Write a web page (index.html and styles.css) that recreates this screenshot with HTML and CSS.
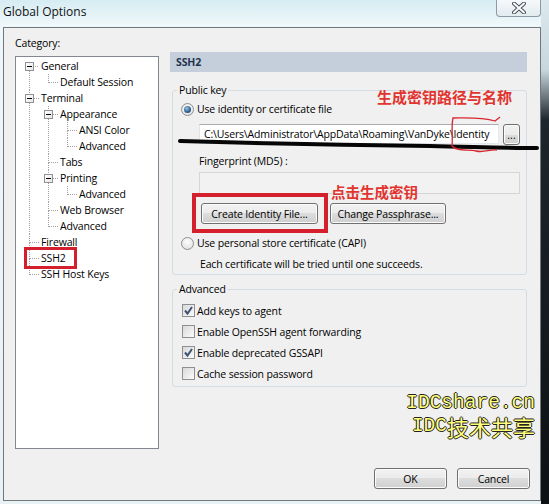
FILE: index.html
```html
<!DOCTYPE html>
<html lang="en">
<head>
    <meta charset="UTF-8">
    <title>Global Options</title>
    <link rel="stylesheet" href="styles.css">
</head>
<body>
    <div class="frame">
        <div class="titlebar">
            <span class="title">Global Options</span>
            <span class="close">
                <svg width="14" height="12" viewBox="0 0 14 12">
                    <path d="M2 1.5 L12 10.5 M12 1.5 L2 10.5" stroke="#4a4f55" stroke-width="4" stroke-linecap="round"/>
                    <path d="M2 1.5 L12 10.5 M12 1.5 L2 10.5" stroke="#fbfcfd" stroke-width="2" stroke-linecap="round"/>
                </svg>
            </span>
        </div>

        <div class="client">
            <div class="main">
                <div class="left">
                    <div class="cat-label">Category:</div>
                    <div class="tree-box">
                        <ul class="tree">
                            <li><span class="exp"></span><span class="txt">General</span>
                                <ul>
                                    <li><span class="txt">Default Session</span></li>
                                </ul>
                            </li>
                            <li><span class="exp"></span><span class="txt">Terminal</span>
                                <ul>
                                    <li><span class="exp"></span><span class="txt">Appearance</span>
                                        <ul>
                                            <li><span class="txt">ANSI Color</span></li>
                                            <li><span class="txt">Advanced</span></li>
                                        </ul>
                                    </li>
                                    <li><span class="txt">Tabs</span></li>
                                    <li><span class="exp"></span><span class="txt">Printing</span>
                                        <ul>
                                            <li><span class="txt">Advanced</span></li>
                                        </ul>
                                    </li>
                                    <li><span class="txt">Web Browser</span></li>
                                    <li><span class="txt">Advanced</span></li>
                                </ul>
                            </li>
                            <li><span class="txt">Firewall</span></li>
                            <li><span class="txt">SSH2</span></li>
                            <li><span class="txt">SSH Host Keys</span></li>
                        </ul>
                    </div>
                </div>

                <div class="right">
                    <div class="page-head">SSH2</div>

                    <fieldset class="group pubkey">
                        <legend>Public key</legend>
                        <div class="opt"><span class="radio on"></span>Use identity or certificate file</div>
                        <div class="path-row">
                            <div class="textbox">C:\Users\Administrator\AppData\Roaming\VanDyke\Identity</div>
                            <button class="btn browse">...</button>
                        </div>
                        <div class="sub-label">Fingerprint (MD5) :</div>
                        <div class="fp-box"></div>
                        <div class="btn-row">
                            <button class="btn create">Create Identity File...</button>
                            <button class="btn change">Change Passphrase...</button>
                        </div>
                        <div class="opt capi"><span class="radio"></span>Use personal store certificate (CAPI)</div>
                        <div class="hint">Each certificate will be tried until one succeeds.</div>
                    </fieldset>

                    <fieldset class="group advanced">
                        <legend>Advanced</legend>
                        <div class="chk-row"><span class="check on"><svg width="11" height="11" viewBox="0 0 11 11"><path d="M2 5.5 L4.5 8.5 L9 2" stroke="#3d5275" stroke-width="2" fill="none"/></svg></span>Add keys to agent</div>
                        <div class="chk-row"><span class="check"></span>Enable OpenSSH agent forwarding</div>
                        <div class="chk-row"><span class="check on"><svg width="11" height="11" viewBox="0 0 11 11"><path d="M2 5.5 L4.5 8.5 L9 2" stroke="#3d5275" stroke-width="2" fill="none"/></svg></span>Enable deprecated GSSAPI</div>
                        <div class="chk-row"><span class="check"></span>Cache session password</div>
                    </fieldset>
                </div>
            </div>

            <div class="footer">
                <button class="btn ok">OK</button>
                <button class="btn cancel">Cancel</button>
            </div>
        </div>

        <!-- 标注 -->
        <div class="note note-path">生成密钥路径与名称</div>
        <div class="note note-create">点击生成密钥</div>
        <div class="mark mark-ssh2"></div>
        <div class="mark mark-create"></div>
        <svg class="scribble" width="549" height="504" viewBox="0 0 549 504">
            <path d="M180 141 C 250 143, 340 145, 430 146 C 480 147, 515 148, 537 148" stroke="#050505" stroke-width="4" fill="none" stroke-linecap="round"/>
            <path d="M500 117 L 495 121 C 482 117, 465 118, 453 118 C 451 127, 453 137, 452 146 C 457 152, 468 149, 476 151 C 484 153, 490 149, 497 150" stroke="#d8262f" stroke-width="1.3" fill="none"/>
        </svg>
        <div class="watermark">
            <div class="wm-line">IDCshare.cn</div>
            <div class="wm-line">IDC<span class="cjk">技术共享</span></div>
        </div>
    </div>
</body>
</html>
```

FILE: styles.css
```css
/* 窗口 */
body {
    margin: 0;
    font-family: "Open Sans", "Noto Sans", "Noto Sans CJK SC", sans-serif;
    font-size: 10.5px;
    letter-spacing: -0.15px;
    color: #000;
}
.frame {
    position: relative;
    width: 549px;
    height: 504px;
    overflow: hidden;
    background:
        linear-gradient(to bottom, #dbe9ee 0, #c8d7de 70px, #1d262c 120px, #0d1013 100%) right top / 8px 100% no-repeat,
        linear-gradient(to bottom, #d6ecf3 0, #eef7f9 24px, #e8f2f5 100%);
}
.titlebar {
    height: 27px;
    display: flex;
    align-items: flex-start;
}
.title {
    font-size: 12px;
    letter-spacing: 0;
    line-height: 16px;
    margin: 4px 0 0 3px;
    color: #111;
}
.close {
    margin-left: auto;
    margin-right: 8px;
    width: 45px;
    height: 17px;
    box-sizing: border-box;
    border: 1px solid #8c9aa6;
    border-top: 0;
    border-radius: 0 0 4px 4px;
    background: linear-gradient(#f6f9fb, #e2ebef);
    display: flex;
    align-items: center;
    justify-content: center;
}

.client {
    margin-left: 3px;
    width: 538px;
    height: 474px;
    box-sizing: border-box;
    border: 1px solid #72777c;
    background-color: #f0f0f0;
    display: flex;
    flex-direction: column;
}
.main {
    display: flex;
    padding: 7px 0 0 11px;
}
.left {
    width: 144px;
}
.cat-label {
    line-height: 16px;
}
.tree-box {
    margin-top: 5px;
    height: 393px;
    box-sizing: border-box;
    border: 1px solid #828790;
    background-color: #fff;
}

/* 树 */
.tree, .tree ul {
    list-style: none;
    margin: 0;
    padding: 0;
}
.tree {
    padding: 1px 0 0 13px;
}
.tree ul {
    margin-left: 7px;
}
.tree li {
    position: relative;
    padding-left: 12px;
}
.tree li::before {
    content: "";
    position: absolute;
    left: 0;
    top: 0;
    width: 9px;
    height: 8px;
    border-left: 1px dotted #a0a0a0;
    border-bottom: 1px dotted #a0a0a0;
}
.tree li:not(:last-child)::after {
    content: "";
    position: absolute;
    left: 0;
    top: 8px;
    bottom: 0;
    border-left: 1px dotted #a0a0a0;
}
.tree > li:first-child::before {
    border-left: 0;
}
.tree .txt {
    display: block;
    height: 16px;
    line-height: 16px;
    white-space: nowrap;
}
.tree .exp {
    position: absolute;
    z-index: 1;
    left: -4px;
    top: 4px;
    width: 9px;
    height: 9px;
    box-sizing: border-box;
    border: 1px solid #919191;
    background: linear-gradient(135deg, #fff, #e6e6e6);
}
.tree .exp::after {
    content: "";
    position: absolute;
    left: 1px;
    top: 3px;
    width: 5px;
    height: 1px;
    background-color: #000;
}

/* 右侧 */
.right {
    width: 357px;
    margin: 17px 0 0 11px;
}
.page-head {
    height: 20px;
    line-height: 20px;
    padding-left: 6px;
    background-color: #c4cfdb;
    color: #1f3350;
    font-weight: bold;
}
.group {
    margin: 0 0 0 2px;
    padding: 3px 0 2px 4px;
    border: 1px solid #d3dce2;
    border-radius: 3px;
    min-width: 0;
}
.group legend {
    padding: 0 2px;
    line-height: 16px;
}
.pubkey {
    margin-top: 10px;
}
.advanced {
    margin-top: 6px;
}
.opt {
    display: flex;
    align-items: center;
    height: 16px;
    padding-left: 4px;
    white-space: nowrap;
}
.radio {
    position: relative;
    width: 13px;
    height: 13px;
    margin-right: 3px;
    box-sizing: border-box;
    border-radius: 50%;
    border: 1px solid #8d8f92;
    background: radial-gradient(circle at 50% 35%, #fdfdfd, #dcdcdc);
}
.radio.on::after {
    content: "";
    position: absolute;
    left: 2px;
    top: 2px;
    width: 7px;
    height: 7px;
    border-radius: 50%;
    background: radial-gradient(circle at 40% 35%, #9cc3e4, #2b5f8e 60%, #1b3d5d);
}
.path-row {
    display: flex;
    margin: 7px 0 0 22px;
}
.textbox {
    width: 300px;
    height: 20px;
    box-sizing: border-box;
    border: 1px solid #abadb3;
    border-color: #abadb3 #e3e9ef #e3e9ef #e2e3ea;
    background-color: #fff;
    padding-left: 4px;
    line-height: 18px;
    white-space: nowrap;
    overflow: hidden;
}
.sub-label {
    margin: 8px 0 0 22px;
    line-height: 16px;
}
.fp-box {
    margin: 3px 0 0 22px;
    width: 321px;
    height: 22px;
    box-sizing: border-box;
    border: 1px solid #d6d6d6;
    background-color: #f2f2f2;
}
.btn-row {
    display: flex;
    gap: 12px;
    margin: 9px 0 0 24px;
}
.capi {
    margin-top: 11px;
}
.hint {
    margin: 5px 0 0 23px;
    line-height: 16px;
}
.chk-row {
    display: flex;
    align-items: center;
    height: 21px;
    padding-left: 5px;
}
.check {
    display: flex;
    align-items: center;
    justify-content: center;
    width: 13px;
    height: 13px;
    margin-right: 2px;
    box-sizing: border-box;
    border: 1px solid #8d8f92;
    background: linear-gradient(135deg, #d9d9d9, #fbfbfb);
}

/* 按钮 */
.btn {
    height: 21px;
    padding: 0;
    box-sizing: border-box;
    border: 1px solid #707070;
    border-radius: 3px;
    background: linear-gradient(#f2f2f2, #ebebeb 50%, #dddddd 50%, #cfcfcf);
    box-shadow: inset 0 0 0 1px #fbfbfb;
    font: inherit;
    letter-spacing: inherit;
    color: #000;
}
.browse {
    width: 17px;
    margin-left: 4px;
    line-height: 14px;
    letter-spacing: 0;
}
.create {
    width: 117px;
}
.change {
    width: 116px;
}
.footer {
    margin-top: auto;
    display: flex;
    justify-content: flex-end;
    gap: 10px;
    padding: 0 10px 11px 0;
}
.ok, .cancel {
    width: 73px;
}

/* 标注 */
.note {
    position: absolute;
    font-family: "Noto Sans CJK SC", sans-serif;
    font-weight: bold;
    letter-spacing: 0;
    color: #e2342f;
    line-height: 18px;
    white-space: nowrap;
}
.note-path {
    left: 377px;
    top: 88px;
    font-size: 15px;
}
.note-create {
    left: 331px;
    top: 183px;
    font-size: 14.5px;
}
.mark {
    position: absolute;
    box-sizing: border-box;
    border: 3px solid #d3202c;
}
.mark-ssh2 {
    left: 24px;
    top: 247px;
    width: 53px;
    height: 22px;
}
.mark-create {
    left: 192px;
    top: 193px;
    width: 136px;
    height: 40px;
    border-width: 4px;
}
.scribble {
    position: absolute;
    left: 0;
    top: 0;
    pointer-events: none;
}
.watermark {
    position: absolute;
    right: 14px;
    top: 392px;
    text-align: right;
    font-family: "Liberation Mono", monospace;
    font-size: 19.5px;
    letter-spacing: 0;
    color: #ffff7a;
    text-shadow: 1px 0 #222, -1px 0 #222, 0 1px #222, 0 -1px #222;
}
.wm-line {
    height: 23px;
    line-height: 23px;
}
.watermark .cjk {
    font-family: "Noto Sans CJK SC", sans-serif;
    font-size: 22px;
    line-height: 23px;
    vertical-align: top;
}
```
